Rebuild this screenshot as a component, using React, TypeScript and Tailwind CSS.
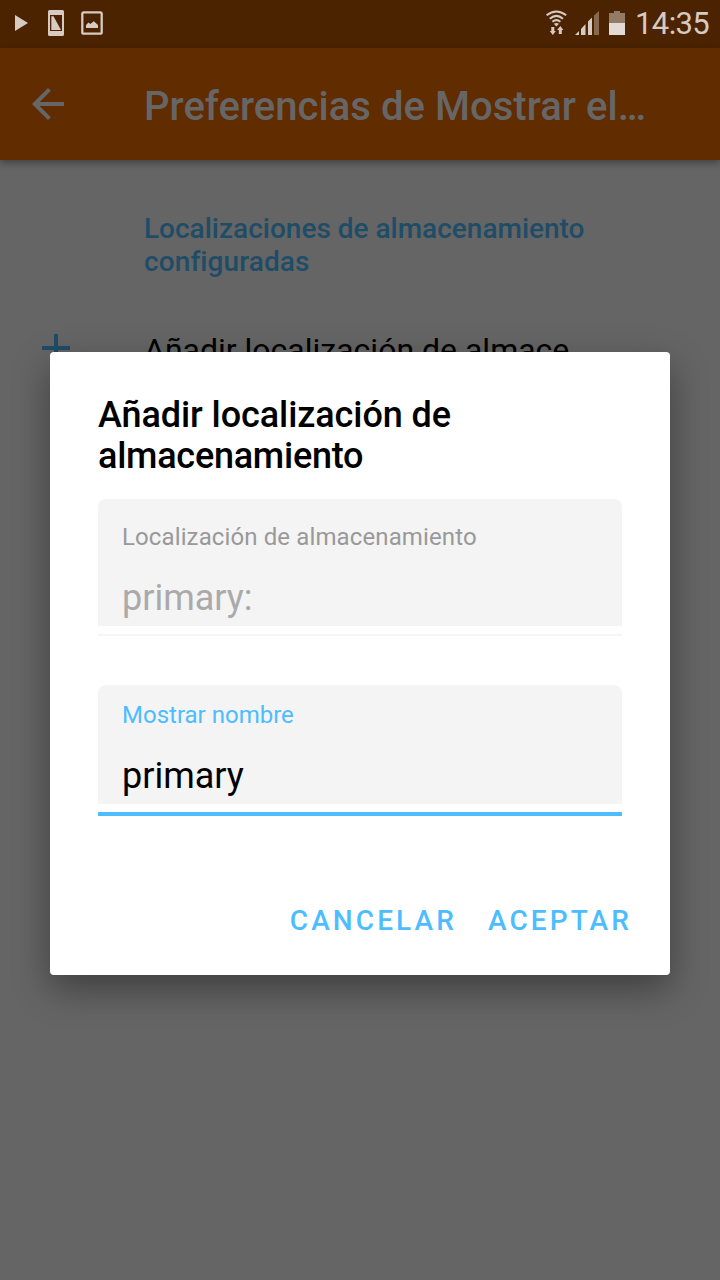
function StatusBar() {
  return (
    <div className="flex h-12 shrink-0 bg-[#4b2300] text-[#d6cac2]">
      <svg width="120" height="48" viewBox="0 0 120 48" fill="currentColor">
        <path d="M15 15 L28 23 L15 31Z" />
        <path
          fillRule="evenodd"
          d="M49.5 10H62.5Q64 10 64 11.5V34.5Q64 36 62.5 36H49.5Q48 36 48 34.5V11.5Q48 10 49.5 10ZM50 15V31H62V15Z"
        />
        <path d="M51.3 16.3H53.5L61 30H51.3Z" />
        <rect x="82.3" y="12.3" width="19.4" height="21.4" rx="1.5" fill="none" stroke="currentColor" strokeWidth="2.3" />
        <path d="M86 28V25L88.5 22.5L90.3 24L93.8 21.2L98 25V28Z" />
      </svg>
      <div className="flex-1" />
      <svg width="98" height="48" viewBox="0 0 98 48" fill="currentColor">
        <g fill="none" stroke="currentColor" strokeWidth="2">
          <path d="M8.6 15.3Q18.4 7.7 28.2 15.3" />
          <path d="M11.8 18.8Q18.4 13 25 18.8" />
          <path d="M14.4 21.8Q18.4 18.5 22.4 21.8" />
        </g>
        <path d="M15.8 23.8Q18.4 22.2 21 23.8L18.4 26.4Z" />
        <path d="M13.3 27H16.3V31H17.8L14.8 35L11.8 31H13.3ZM20.8 34H23.8V30H25.4L22.3 26L19.2 30H20.8Z" />
        <path d="M37 35L41 31V35ZM43 29L47.5 24V35H43ZM50 21.5L54 17.5V35H50Z" />
        <path d="M56 15.5L61 11V35H56Z" fill="#87694f" />
        <path d="M71 13H76V11H82V13H87V23H71Z" fill="#947b68" />
        <path d="M71 23H87V35H71Z" fill="#e2dad4" />
      </svg>
      <span className="w-[84px] pt-px -indent-px text-[31px] leading-[46px] tracking-[-0.6px]">14:35</span>
    </div>
  );
}

function AppBar() {
  return (
    <header className="z-10 flex h-28 shrink-0 items-center bg-[#612c00] text-[#666666] shadow-[0_3px_7px_rgba(0,0,0,0.35)]">
      <svg className="ml-6" width="48" height="48" viewBox="0 0 24 24" fill="currentColor">
        <path d="M20 11H7.83l5.59-5.59L12 4l-8 8 8 8 1.41-1.41L7.83 13H20v-2z" />
      </svg>
      <h1 className="ml-[72px] w-[504px] truncate pt-1.5 text-[40px] leading-[52px] font-medium tracking-[0.04px]">
        Preferencias de Mostrar el…
      </h1>
    </header>
  );
}

function Dialog() {
  return (
    <section
      role="dialog"
      className="absolute top-[352px] left-[50px] z-20 flex h-[623px] w-[620px] flex-col rounded bg-white px-12 pt-[43px] shadow-[0_14px_36px_rgba(0,0,0,0.38)]"
    >
      <h2 className="text-[36px] leading-[41px] font-medium text-black">
        <span className="block tracking-[-0.08px]">Añadir localización de</span>
        <span className="block tracking-[-0.25px]">almacenamiento</span>
      </h2>
      <div className="mt-[22px] h-[127px] rounded-t-lg bg-[#f4f4f4] px-6 pt-6">
        <div className="text-[24px] leading-7 tracking-[0.12px] text-[#999999]">Localización de almacenamiento</div>
        <div className="mt-[26px] text-[36px] leading-[42px] text-[#aaaaaa]">primary:</div>
      </div>
      <div className="mt-2 h-0.5 bg-[#f6f6f6]" />
      <div className="mt-[49px] h-[119px] rounded-t-lg bg-[#f4f4f4] px-6 pt-4">
        <div className="text-[24px] leading-7 text-[#4ebdff]">Mostrar nombre</div>
        <div className="mt-[26px] text-[36px] leading-[42px] text-black">primary</div>
      </div>
      <div className="mt-2 h-1 bg-[#4ebdff]" />
      <div className="mt-[87px] -mr-2.5 flex justify-end gap-[31px] text-[28px] leading-9 font-medium tracking-[3.1px] text-[#4ebdff]">
        <button>CANCELAR</button>
        <button>ACEPTAR</button>
      </div>
    </section>
  );
}

export default function App() {
  return (
    <div className="relative flex h-[1280px] w-[720px] flex-col overflow-hidden bg-[#656565] font-[Roboto,sans-serif]">
      <StatusBar />
      <AppBar />
      <main className="flex flex-col">
        <h3 className="mt-[52px] ml-36 text-[28px] leading-[33px] font-medium text-[#1f4c66]">
          Localizaciones de almacenamiento
          <br />
          <span className="tracking-[0.1px]">configuradas</span>
        </h3>
        <div className="mt-[46px] flex h-12 items-center">
          <svg className="ml-8" width="48" height="48" viewBox="0 0 24 24" fill="#1f4c66">
            <path d="M19 13h-6v6h-2v-6H5v-2h6V5h2v6h6v2z" />
          </svg>
          <span className="ml-16 pt-1 text-[32px] leading-[38px] text-black">Añadir localización de almace…</span>
        </div>
      </main>
      <Dialog />
    </div>
  );
}
